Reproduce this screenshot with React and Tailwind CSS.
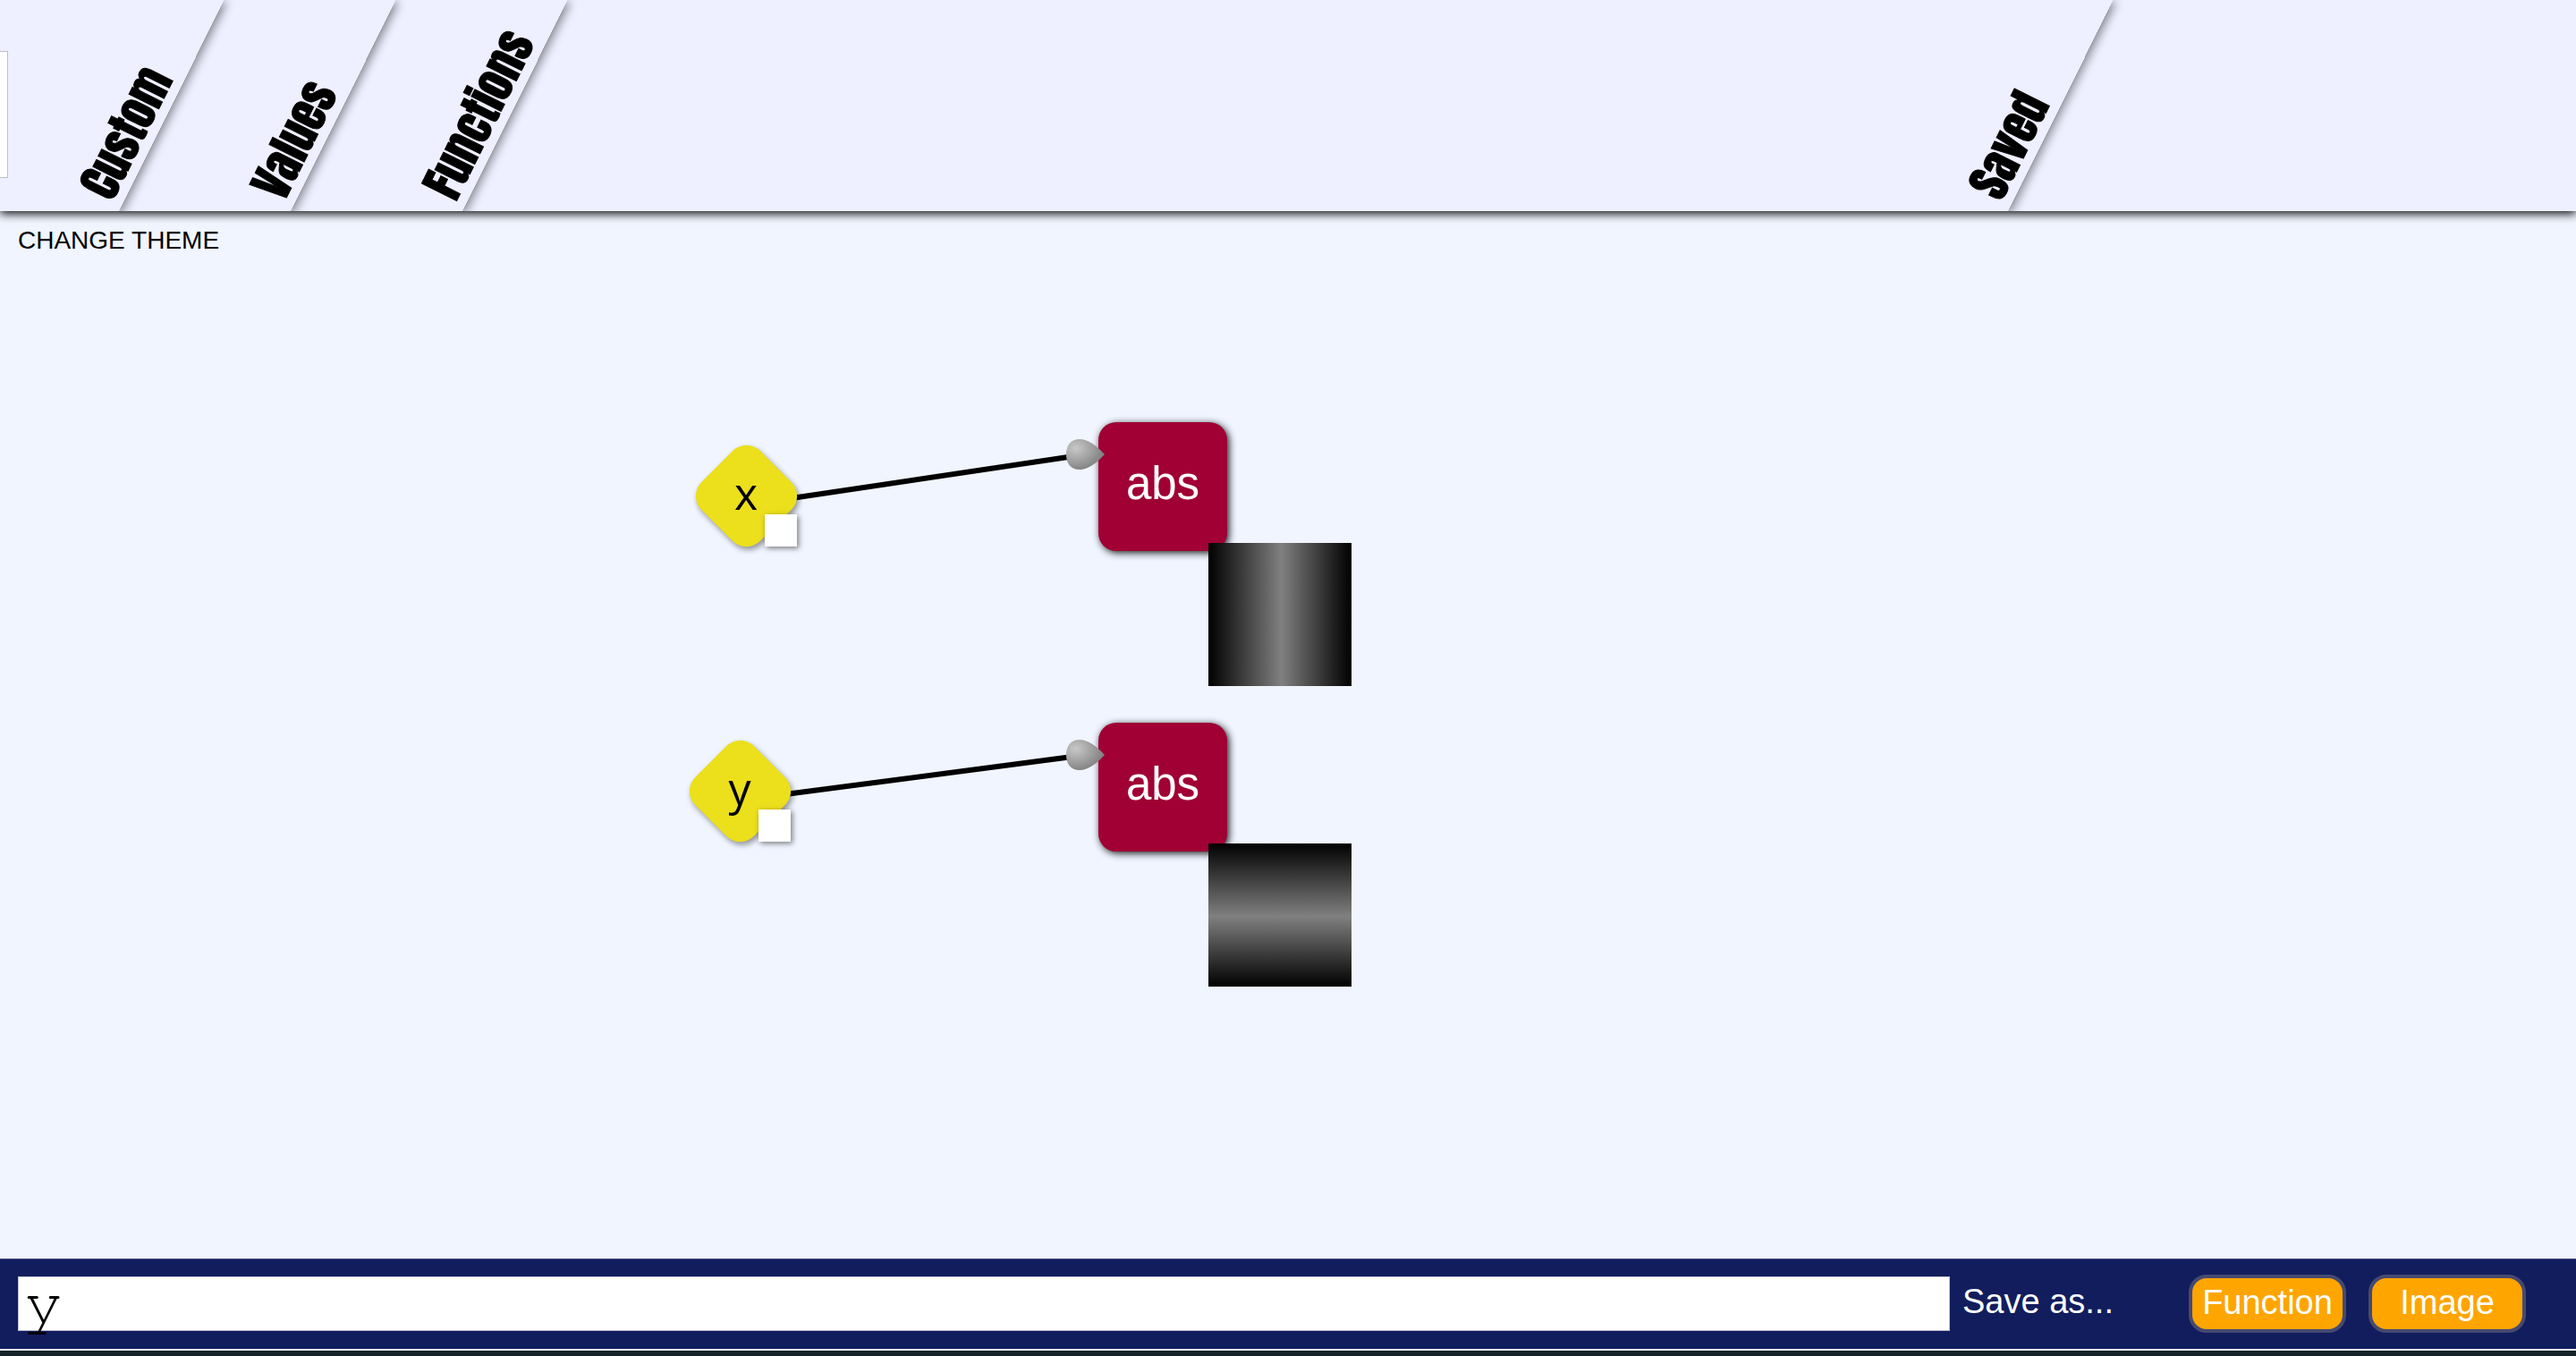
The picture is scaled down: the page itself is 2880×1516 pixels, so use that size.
function Tab({ label }) {
  return (
    <button className="relative flex h-full w-48 shrink-0 items-end justify-end">
      <span
        aria-hidden="true"
        className="absolute inset-0 origin-bottom -skew-x-[26.5deg] shadow-[4px_2px_10px_rgba(0,0,0,0.45)] [clip-path:inset(0_-20px_0_20px)]"
      />
      <span className="w-0 origin-bottom-left rotate-[-63.5deg] pl-2.5 text-left font-['Impact','Anton',sans-serif] text-[51px] leading-[46px] whitespace-nowrap [-webkit-text-stroke:1px_#000]">
        {label}
      </span>
    </button>
  );
}

function VariableNode({ name, place }) {
  return (
    <div className={`absolute size-[114px] ${place}`}>
      <div className="flex size-full items-center justify-center">
        <div className="size-[93px] shrink-0 rotate-45 rounded-[22px] bg-[#ecdf1b] shadow-[4px_1px_6px_rgba(0,0,0,0.4)]" />
      </div>
      <span className="absolute inset-0 flex items-center justify-center pb-1.5 font-['Open_Sans',sans-serif] text-[50px] leading-[60px] font-medium">
        {name}
      </span>
      <div className="absolute right-0 bottom-0 size-9 bg-white shadow-[2px_2px_6px_rgba(0,0,0,0.5)]" />
    </div>
  );
}

function FunctionNode({ name, place, preview }) {
  return (
    <div className={`absolute size-36 ${place}`}>
      <div className="flex size-full items-center justify-center rounded-[20px] bg-[#a00034] pb-1.5 text-[51px] leading-[60px] text-white shadow-[2px_2px_8px_rgba(0,0,0,0.9)]">
        {name}
      </div>
      <svg className="absolute top-[19px] -left-9 h-[34px] w-[43px]" viewBox="0 0 43 34">
        <path d="M43 17C34 7 24 0 15 0C5 0 0 7 0 17C0 27 5 34 15 34C24 34 34 27 43 17Z" fill="url(#drop)" />
      </svg>
      <div className={`absolute top-[135px] left-[123px] size-40 ${preview}`} />
    </div>
  );
}

export default function App() {
  return (
    <div className="flex min-h-screen flex-col bg-[#f0f5ff] font-['Liberation_Sans',Arial,sans-serif] text-black">
      <header className="relative flex h-[236px] bg-[#eeefff] shadow-[0_3px_10px_rgba(0,0,0,0.95)]">
        <div className="flex flex-1 overflow-hidden">
          <div className="absolute top-[57px] left-0 h-[142px] w-[9px] border border-l-0 border-[#c0c0c0] bg-white" />
          <nav className="-ml-[59px] flex flex-1">
            <Tab label="Custom" />
            <Tab label="Values" />
            <Tab label="Functions" />
            <div className="flex-1" />
            <Tab label="Saved" />
            <div className="w-[635px]" />
          </nav>
        </div>
      </header>

      <main className="relative flex-1">
        <button className="mt-[17px] ml-5 block text-[28px] leading-8">CHANGE THEME</button>

        <svg className="absolute top-0 left-0 h-[900px] w-[1240px]" viewBox="0 0 1240 900">
          <defs>
            <radialGradient id="drop" cx="0.25" cy="0.3" r="0.75">
              <stop offset="0" stopColor="#c8c8c8" />
              <stop offset="1" stopColor="#808080" />
            </radialGradient>
          </defs>
          <path d="M885 321L1214 272M878 652L1214 608" stroke="#000" strokeWidth="6" />
        </svg>

        <VariableNode name="x" place="top-[261px] left-[777px]" />
        <VariableNode name="y" place="top-[591px] left-[770px]" />
        <FunctionNode
          name="abs"
          place="top-[236px] left-[1228px]"
          preview="bg-[linear-gradient(to_right,#000,#808080_51%,#000)]"
        />
        <FunctionNode
          name="abs"
          place="top-[572px] left-[1228px]"
          preview="bg-[linear-gradient(to_bottom,#000,#808080_51%,#000)]"
        />
      </main>

      <footer className="border-b-[6px] border-[#17252a]">
        <div className="mb-0.5 flex h-[101px] items-start border-t border-[#4a5285] bg-[#121d5e] pt-[19px] pl-5 text-[38px] leading-[44px] text-white">
          <div className="flex h-[61px] flex-1 items-start border border-[#c0c0d0] bg-white">
            <input
              aria-label="Formula"
              defaultValue="y"
              className="-mt-2.5 h-[78px] w-full bg-transparent px-1.5 font-['FreeMono','Courier_New',monospace] text-[72px] text-black outline-none"
            />
          </div>
          <span className="ml-3.5 w-[253px] pt-1.5">Save as...</span>
          <div className="-mt-0.5 mr-14 flex gap-[25px]">
            <button className="h-[65px] w-44 rounded-[20px] border-4 border-[#464a70] bg-[#ffa500] pb-1">Function</button>
            <button className="h-[65px] w-44 rounded-[20px] border-4 border-[#464a70] bg-[#ffa500] pb-1">Image</button>
          </div>
        </div>
      </footer>
    </div>
  );
}
